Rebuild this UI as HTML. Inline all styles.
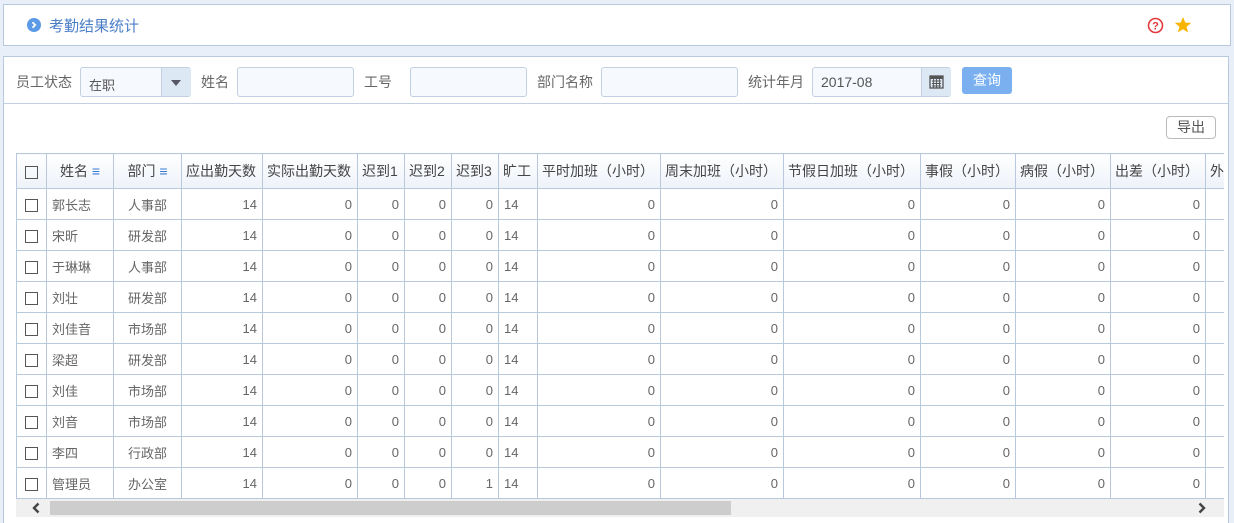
<!DOCTYPE html>
<html style="width:1234px;height:523px;overflow:hidden"><head><meta charset="utf-8">
<style>
*{box-sizing:border-box;margin:0;padding:0}
body{width:1234px;height:523px;background:#e9eff8;font-family:"Liberation Sans","Noto Sans CJK SC",sans-serif;font-size:13px;color:#555;position:relative;overflow:hidden}
.abs{position:absolute}
.top{left:3px;top:4px;width:1228px;height:42px;background:#fff;border:1px solid #b9c9dd}
.main{left:3px;top:56px;width:1226px;height:470px;background:#fff;border:1px solid #b9c9dd}
.lbl{font-size:14px;color:#666;top:72px}
.inp{top:67px;height:30px;background:#f6f9fd;border:1px solid #c2d0e2;border-radius:3px}
table{position:absolute;left:16px;top:153px;border-collapse:collapse;table-layout:fixed;width:1268px}
td,th{border:1px solid #b9c9dd;height:31px;font-weight:normal;white-space:nowrap;overflow:hidden;padding:0 5px}
th{height:35px;background:linear-gradient(#fff,#edf2f9);color:#444;font-size:14px;text-align:left;padding:0 4px}
td{text-align:right;color:#666;font-size:13px}
td.l{text-align:left}
td.c,th.c{text-align:center}
.cb{display:inline-block;width:13px;height:13px;border:1px solid #555;vertical-align:middle}
.m{color:#3b7bd4;font-size:14px}
</style></head><body>
<div class="abs top"></div>
<svg class="abs" style="left:27px;top:18px" width="14" height="14" viewBox="0 0 14 14"><circle cx="7" cy="7" r="7" fill="#5b9ae6"/><path d="M5.5 4.3L8.2 7 5.5 9.7" fill="none" stroke="#fff" stroke-width="1.8"/></svg>
<div class="abs" style="left:49px;top:15px;font-size:15px;color:#4a7fc7">考勤结果统计</div>
<svg class="abs" style="left:1147px;top:17px" width="17" height="17" viewBox="0 0 17 17"><circle cx="8.5" cy="8.5" r="7" fill="none" stroke="#e4393c" stroke-width="1.6"/><text x="8.5" y="12.5" font-size="11" font-weight="bold" fill="#e4393c" text-anchor="middle" font-family="Liberation Sans">?</text></svg>
<svg class="abs" style="left:1174px;top:16px" width="18" height="18" viewBox="0 0 18 18"><polygon points="9,1 11.3,6.6 17.2,6.9 12.6,10.7 14.1,16.5 9,13.3 3.9,16.5 5.4,10.7 0.8,6.9 6.7,6.6" fill="#f7b500"/></svg>

<div class="abs main"></div>
<div class="abs" style="left:4px;top:103px;width:1224px;height:1px;background:#c2d0e2"></div>
<div class="abs lbl" style="left:16px">员工状态</div>
<div class="abs inp" style="left:80px;width:111px"><span style="position:absolute;left:8px;top:7px;font-size:13px;color:#555">在职</span><div style="position:absolute;left:80px;top:0;width:30px;height:28px;background:#dde8f5;border-left:1px solid #c2d0e2"></div><div style="position:absolute;left:90px;top:12px;border:5px solid transparent;border-top:6px solid #556;border-bottom:0"></div></div>
<div class="abs lbl" style="left:201px">姓名</div>
<div class="abs inp" style="left:237px;width:117px"></div>
<div class="abs lbl" style="left:364px">工号</div>
<div class="abs inp" style="left:410px;width:117px"></div>
<div class="abs lbl" style="left:537px">部门名称</div>
<div class="abs inp" style="left:601px;width:137px"></div>
<div class="abs lbl" style="left:748px">统计年月</div>
<div class="abs inp" style="left:812px;width:139px"><span style="position:absolute;left:8px;top:6px;font-size:14px;color:#555">2017-08</span><div style="position:absolute;left:108px;top:0;width:30px;height:28px;background:#dde8f5;border-left:1px solid #c2d0e2"></div>
<svg style="position:absolute;left:116px;top:6px" width="15" height="15" viewBox="0 0 15 15"><rect x="1" y="2" width="13" height="12" fill="none" stroke="#555" stroke-width="1.3"/><rect x="1" y="2" width="13" height="3" fill="#555"/><path d="M3 7h9M3 9.5h9M3 12h9M4.5 5v9M7.5 5v9M10.5 5v9" stroke="#555" stroke-width=".9"/></svg></div>
<div class="abs" style="left:962px;top:67px;width:50px;height:27px;background:#7ab0f0;border-radius:3px;color:#fff;font-size:14px;text-align:center;line-height:27px">查询</div>
<div class="abs" style="left:1166px;top:116px;width:50px;height:23px;border:1px solid #bbb;border-radius:4px;color:#555;font-size:14px;text-align:center;line-height:21px">导出</div>

<div class="abs" style="left:16px;top:153px;width:1208px;height:346px;overflow:hidden">
<table style="left:0;top:0">
<colgroup><col style="width:30px"><col style="width:67px"><col style="width:68px"><col style="width:81px"><col style="width:95px"><col style="width:47px"><col style="width:47px"><col style="width:47px"><col style="width:39px"><col style="width:123px"><col style="width:123px"><col style="width:137px"><col style="width:95px"><col style="width:95px"><col style="width:95px"><col style="width:79px"></colgroup>
<tr><th class="c"><span class="cb"></span></th><th class="c">姓名 <span class="m">≡</span></th><th class="c">部门 <span class="m">≡</span></th><th>应出勤天数</th><th>实际出勤天数</th><th>迟到1</th><th>迟到2</th><th>迟到3</th><th>旷工</th><th>平时加班（小时）</th><th>周末加班（小时）</th><th>节假日加班（小时）</th><th>事假（小时）</th><th>病假（小时）</th><th>出差（小时）</th><th>外出（小时）</th></tr>
<tr><td class="c"><span class="cb"></span></td><td class="l">郭长志</td><td class="c">人事部</td><td>14</td><td>0</td><td>0</td><td>0</td><td>0</td><td class="l">14</td><td>0</td><td>0</td><td>0</td><td>0</td><td>0</td><td>0</td><td></td></tr>
<tr><td class="c"><span class="cb"></span></td><td class="l">宋昕</td><td class="c">研发部</td><td>14</td><td>0</td><td>0</td><td>0</td><td>0</td><td class="l">14</td><td>0</td><td>0</td><td>0</td><td>0</td><td>0</td><td>0</td><td></td></tr>
<tr><td class="c"><span class="cb"></span></td><td class="l">于琳琳</td><td class="c">人事部</td><td>14</td><td>0</td><td>0</td><td>0</td><td>0</td><td class="l">14</td><td>0</td><td>0</td><td>0</td><td>0</td><td>0</td><td>0</td><td></td></tr>
<tr><td class="c"><span class="cb"></span></td><td class="l">刘壮</td><td class="c">研发部</td><td>14</td><td>0</td><td>0</td><td>0</td><td>0</td><td class="l">14</td><td>0</td><td>0</td><td>0</td><td>0</td><td>0</td><td>0</td><td></td></tr>
<tr><td class="c"><span class="cb"></span></td><td class="l">刘佳音</td><td class="c">市场部</td><td>14</td><td>0</td><td>0</td><td>0</td><td>0</td><td class="l">14</td><td>0</td><td>0</td><td>0</td><td>0</td><td>0</td><td>0</td><td></td></tr>
<tr><td class="c"><span class="cb"></span></td><td class="l">梁超</td><td class="c">研发部</td><td>14</td><td>0</td><td>0</td><td>0</td><td>0</td><td class="l">14</td><td>0</td><td>0</td><td>0</td><td>0</td><td>0</td><td>0</td><td></td></tr>
<tr><td class="c"><span class="cb"></span></td><td class="l">刘佳</td><td class="c">市场部</td><td>14</td><td>0</td><td>0</td><td>0</td><td>0</td><td class="l">14</td><td>0</td><td>0</td><td>0</td><td>0</td><td>0</td><td>0</td><td></td></tr>
<tr><td class="c"><span class="cb"></span></td><td class="l">刘音</td><td class="c">市场部</td><td>14</td><td>0</td><td>0</td><td>0</td><td>0</td><td class="l">14</td><td>0</td><td>0</td><td>0</td><td>0</td><td>0</td><td>0</td><td></td></tr>
<tr><td class="c"><span class="cb"></span></td><td class="l">李四</td><td class="c">行政部</td><td>14</td><td>0</td><td>0</td><td>0</td><td>0</td><td class="l">14</td><td>0</td><td>0</td><td>0</td><td>0</td><td>0</td><td>0</td><td></td></tr>
<tr><td class="c"><span class="cb"></span></td><td class="l">管理员</td><td class="c">办公室</td><td>14</td><td>0</td><td>0</td><td>0</td><td>1</td><td class="l">14</td><td>0</td><td>0</td><td>0</td><td>0</td><td>0</td><td>0</td><td></td></tr>
</table>
</div>
<div class="abs" style="left:16px;top:499px;width:1208px;height:18px;background:#f0f0f0"></div>
<div class="abs" style="left:50px;top:501px;width:681px;height:14px;background:#cdcdcd"></div>
<svg class="abs" style="left:31px;top:502px" width="10" height="12" viewBox="0 0 10 12"><path d="M7.5 1.5L3 6l4.5 4.5" fill="none" stroke="#444" stroke-width="2.4"/></svg>
<svg class="abs" style="left:1197px;top:502px" width="10" height="12" viewBox="0 0 10 12"><path d="M2.5 1.5L7 6l-4.5 4.5" fill="none" stroke="#444" stroke-width="2.4"/></svg>
</body></html>
